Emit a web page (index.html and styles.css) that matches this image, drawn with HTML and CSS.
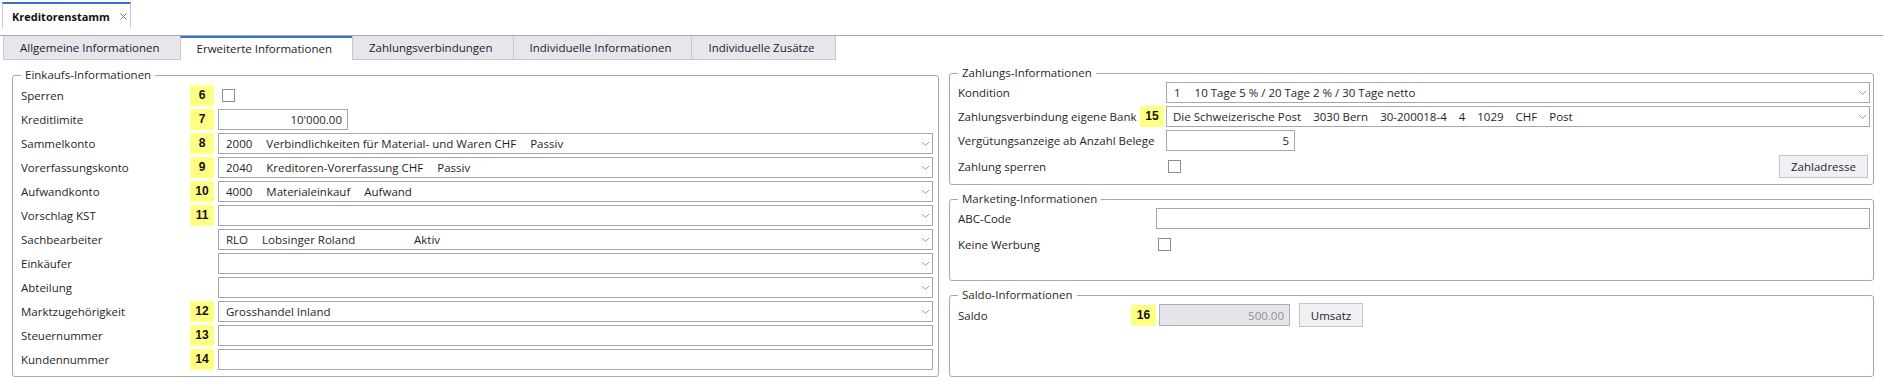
FILE: index.html
```html
<!DOCTYPE html>
<html lang="de">
<head>
  <meta charset="UTF-8">
  <title>Kreditorenstamm</title>
  <link rel="stylesheet" href="styles.css">
</head>
<body>
  <div class="doc-tabs">
    <div class="doc-tab">
      <span>Kreditorenstamm</span>
      <svg class="close" width="7" height="7" viewBox="0 0 7 7"><path d="M0.5 0.5 L6.5 6.5 M6.5 0.5 L0.5 6.5"/></svg>
    </div>
  </div>

  <div class="page-tabs">
    <div class="page-tab">Allgemeine Informationen</div>
    <div class="page-tab active">Erweiterte Informationen</div>
    <div class="page-tab">Zahlungsverbindungen</div>
    <div class="page-tab">Individuelle Informationen</div>
    <div class="page-tab last">Individuelle Zusätze</div>
  </div>

  <div class="content">
    <!-- linke Spalte -->
    <fieldset class="group purchase">
      <legend>Einkaufs-Informationen</legend>
      <div class="row">
        <span class="label">Sperren</span><span class="badge">6</span>
        <span class="ctrl"><span class="check"></span></span>
      </div>
      <div class="row">
        <span class="label">Kreditlimite</span><span class="badge">7</span>
        <span class="ctrl"><span class="field num w-limit">10'000.00</span></span>
      </div>
      <div class="row">
        <span class="label">Sammelkonto</span><span class="badge">8</span>
        <span class="ctrl"><span class="field select"><span class="v">2000</span><span class="v">Verbindlichkeiten für Material- und Waren CHF</span><span class="v">Passiv</span><svg class="chev" width="7" height="4" viewBox="0 0 7 4"><path d="M0 0 L3.5 3.5 L7 0"/></svg></span></span>
      </div>
      <div class="row">
        <span class="label">Vorerfassungskonto</span><span class="badge">9</span>
        <span class="ctrl"><span class="field select"><span class="v">2040</span><span class="v">Kreditoren-Vorerfassung CHF</span><span class="v">Passiv</span><svg class="chev" width="7" height="4" viewBox="0 0 7 4"><path d="M0 0 L3.5 3.5 L7 0"/></svg></span></span>
      </div>
      <div class="row">
        <span class="label">Aufwandkonto</span><span class="badge">10</span>
        <span class="ctrl"><span class="field select"><span class="v">4000</span><span class="v">Materialeinkauf</span><span class="v">Aufwand</span><svg class="chev" width="7" height="4" viewBox="0 0 7 4"><path d="M0 0 L3.5 3.5 L7 0"/></svg></span></span>
      </div>
      <div class="row">
        <span class="label">Vorschlag KST</span><span class="badge">11</span>
        <span class="ctrl"><span class="field select"><svg class="chev" width="7" height="4" viewBox="0 0 7 4"><path d="M0 0 L3.5 3.5 L7 0"/></svg></span></span>
      </div>
      <div class="row">
        <span class="label">Sachbearbeiter</span><span></span>
        <span class="ctrl"><span class="field select"><span class="v">RLO</span><span class="v v-name">Lobsinger Roland</span><span class="v">Aktiv</span><svg class="chev" width="7" height="4" viewBox="0 0 7 4"><path d="M0 0 L3.5 3.5 L7 0"/></svg></span></span>
      </div>
      <div class="row">
        <span class="label">Einkäufer</span><span></span>
        <span class="ctrl"><span class="field select"><svg class="chev" width="7" height="4" viewBox="0 0 7 4"><path d="M0 0 L3.5 3.5 L7 0"/></svg></span></span>
      </div>
      <div class="row">
        <span class="label">Abteilung</span><span></span>
        <span class="ctrl"><span class="field select"><svg class="chev" width="7" height="4" viewBox="0 0 7 4"><path d="M0 0 L3.5 3.5 L7 0"/></svg></span></span>
      </div>
      <div class="row">
        <span class="label">Marktzugehörigkeit</span><span class="badge">12</span>
        <span class="ctrl"><span class="field select"><span class="v">Grosshandel Inland</span><svg class="chev" width="7" height="4" viewBox="0 0 7 4"><path d="M0 0 L3.5 3.5 L7 0"/></svg></span></span>
      </div>
      <div class="row">
        <span class="label">Steuernummer</span><span class="badge">13</span>
        <span class="ctrl"><span class="field"></span></span>
      </div>
      <div class="row">
        <span class="label">Kundennummer</span><span class="badge">14</span>
        <span class="ctrl"><span class="field"></span></span>
      </div>
    </fieldset>

    <!-- rechte Spalte -->
    <div class="side">
      <fieldset class="group payment">
        <legend>Zahlungs-Informationen</legend>
        <div class="row">
          <span class="label">Kondition</span><span></span>
          <span class="ctrl"><span class="field select"><span class="v">1</span><span class="v">10 Tage 5 % / 20 Tage 2 % / 30 Tage netto</span><svg class="chev" width="7" height="4" viewBox="0 0 7 4"><path d="M0 0 L3.5 3.5 L7 0"/></svg></span></span>
        </div>
        <div class="row">
          <span class="label">Zahlungsverbindung eigene Bank</span><span class="badge">15</span>
          <span class="ctrl"><span class="field select bank"><span class="v">Die Schweizerische Post</span><span class="v">3030 Bern</span><span class="v">30-200018-4</span><span class="v">4</span><span class="v">1029</span><span class="v">CHF</span><span class="v">Post</span><svg class="chev" width="7" height="4" viewBox="0 0 7 4"><path d="M0 0 L3.5 3.5 L7 0"/></svg></span></span>
        </div>
        <div class="row">
          <span class="label">Vergütungsanzeige ab Anzahl Belege</span><span></span>
          <span class="ctrl"><span class="field num w-count">5</span></span>
        </div>
        <div class="row tall">
          <span class="label">Zahlung sperren</span><span></span>
          <span class="ctrl"><span class="check"></span><span class="btn btn-address">Zahladresse</span></span>
        </div>
      </fieldset>

      <fieldset class="group marketing">
        <legend>Marketing-Informationen</legend>
        <div class="row">
          <span class="label">ABC-Code</span><span></span>
          <span class="ctrl"><span class="field"></span></span>
        </div>
        <div class="row">
          <span class="label">Keine Werbung</span><span></span>
          <span class="ctrl"><span class="check"></span></span>
        </div>
      </fieldset>

      <fieldset class="group balance">
        <legend>Saldo-Informationen</legend>
        <div class="row tall">
          <span class="label">Saldo</span><span class="badge">16</span>
          <span class="ctrl"><span class="field num disabled w-saldo">500.00</span><span class="btn btn-turnover">Umsatz</span></span>
        </div>
      </fieldset>
    </div>
  </div>
</body>
</html>
```

FILE: styles.css
```css
* {
  margin: 0;
  padding: 0;
  box-sizing: border-box;
}

body {
  font-family: "Open Sans", "Noto Sans", sans-serif;
  font-size: 11.5px;
  color: #1f1f1f;
  background: #ffffff;
  width: 1883px;
  height: 382px;
  overflow: hidden;
}

/* Dokument-Tab oben */
.doc-tabs {
  height: 36px;
  padding: 2px 0 0 2px;
  border-bottom: 1px solid #a6a6ae;
}

.doc-tab {
  width: 129px;
  height: 26px;
  display: flex;
  align-items: center;
  padding-left: 9px;
  border-top: 2px solid #3a6fcf;
  border-left: 1px solid #c9c9cf;
  border-right: 1px solid #c9c9cf;
  font-size: 11px;
  font-weight: 700;
  color: #111;
}

.doc-tab .close {
  margin-left: 10px;
  stroke: #7a7a7a;
  stroke-width: 1;
  fill: none;
}

/* Register */
.page-tabs {
  display: flex;
  padding-left: 3px;
  height: 24px;
}

.page-tab {
  height: 24px;
  line-height: 23px;
  padding: 0 20px 0 16px;
  background: #e6e7ec;
  border-left: 1px solid #c6c7cd;
  border-bottom: 1px solid #c6c7cd;
  color: #222;
}

.page-tab.last {
  border-right: 1px solid #c6c7cd;
}

.page-tab.active {
  background: #ffffff;
  border-top: 2px solid #3a6fcf;
  border-bottom: none;
  line-height: 21px;
}

/* Inhalt */
.content {
  display: grid;
  grid-template-columns: 927px 925px;
  column-gap: 10px;
  padding-left: 12px;
}

.side {
  display: flex;
  flex-direction: column;
  gap: 6px;
  margin-top: 5px;
}

.group {
  border: 1px solid #a6a6ae;
  border-radius: 3px;
  padding: 0 3px 6px 8px;
  min-width: 0;
}

.group legend {
  padding: 0 4px;
  line-height: 16px;
  color: #2a2a2a;
}

.row {
  display: grid;
  grid-template-columns: var(--label) var(--badge) 1fr;
  align-items: center;
  height: 21px;
  margin-top: 3px;
}

.row:first-of-type {
  margin-top: 0;
}

.row.tall {
  height: 24px;
}

.purchase {
  --label: 169px;
  --badge: 24px;
  --gap: 4px;
  margin-top: 7px;
  padding: 2px 5px 6px 8px;
}

.payment {
  --label: 182px;
  --badge: 24px;
  --gap: 2px;
  padding-top: 1px;
}

.marketing {
  --label: 173px;
  --badge: 25px;
  --gap: 0px;
  padding-top: 1px;
  padding-bottom: 25px;
}

.marketing .row + .row {
  margin-top: 5px;
}

.balance {
  --label: 173px;
  --badge: 25px;
  --gap: 3px;
  flex: 1;
}

.label {
  white-space: nowrap;
}

.badge {
  height: 21px;
  background: #ffff84;
  font-family: "Liberation Sans", Arial, sans-serif;
  font-weight: 700;
  font-size: 12px;
  line-height: 21px;
  text-align: center;
  color: #111;
}

.ctrl {
  display: flex;
  align-items: center;
  margin-left: var(--gap);
  min-width: 0;
}

.field {
  flex: 1;
  height: 21px;
  display: flex;
  align-items: center;
  padding: 0 3px 0 7px;
  border: 1px solid #a6a6ae;
  background: #ffffff;
  white-space: nowrap;
  color: #1f1f1f;
}

.field.num {
  flex: none;
  justify-content: flex-end;
  padding: 0 5px;
}

.field.bank {
  padding-left: 6px;
}

.field.bank .v + .v {
  margin-left: 12px;
}

.w-limit { width: 130px; }
.w-count { width: 129px; }

.w-saldo {
  width: 131px;
  height: 22px;
}

.field.disabled {
  background: #e6e6ea;
  border-color: #aeaeb6;
  color: #8e8e8e;
}

.v + .v {
  margin-left: 14px;
}

.v-name {
  display: inline-block;
  width: 138px;
}

.chev {
  margin-left: auto;
  fill: none;
  stroke: #9d9da5;
  stroke-width: 1;
}

.check {
  width: 13px;
  height: 13px;
  margin-left: 4px;
  border: 1px solid #8c8c94;
  background: #ffffff;
}

.payment .check,
.marketing .check {
  margin-left: 2px;
}

.btn {
  height: 23px;
  display: flex;
  align-items: center;
  justify-content: center;
  border: 1px solid #c4c5cb;
  background: #f1f1f5;
  color: #1f1f1f;
}

.btn-address {
  width: 89px;
  margin-left: auto;
  margin-right: 2px;
}

.btn-turnover {
  width: 64px;
  height: 24px;
  margin-left: 9px;
}
```
